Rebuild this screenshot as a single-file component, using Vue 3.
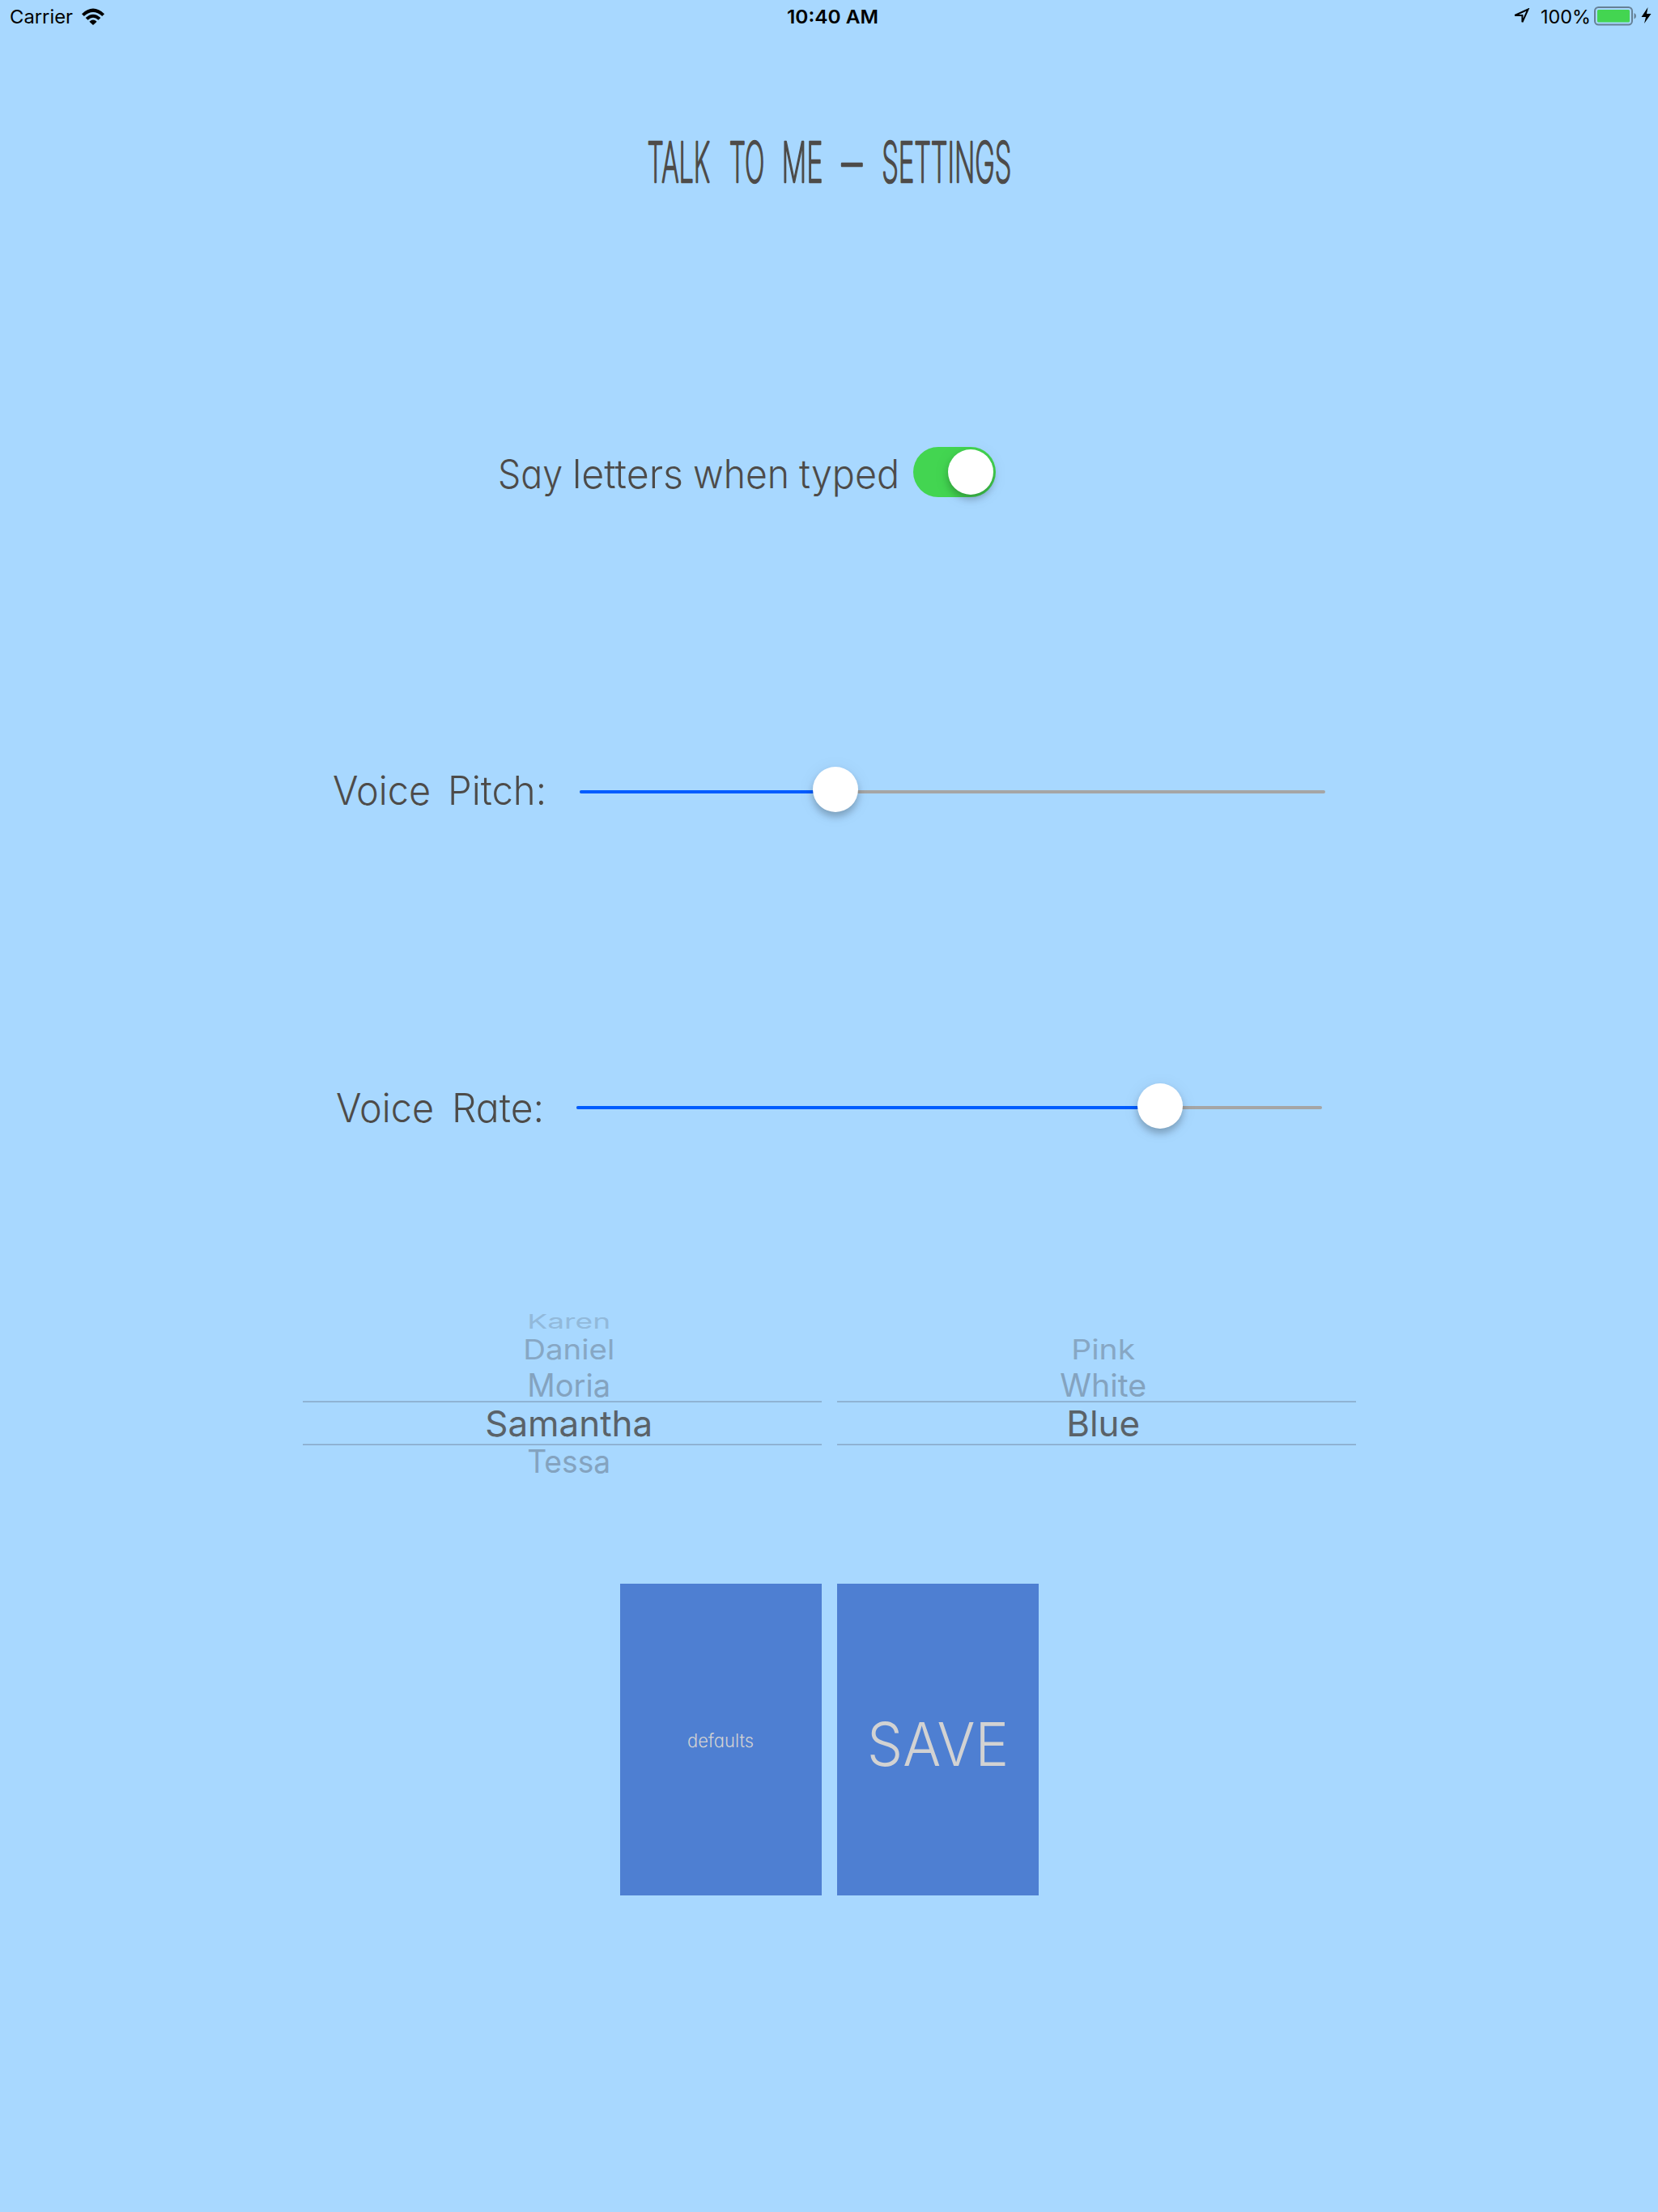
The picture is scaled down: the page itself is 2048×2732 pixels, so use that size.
<script setup>
import { h } from 'vue'

// A line of text whose words are fitted to fixed widths: [word, x, width]
const FitText = (props) =>
  h(
    'svg',
    { width: props.width, height: props.height, overflow: 'visible', 'font-size': props.size },
    props.words.map(([word, x, w]) =>
      h('text', { x, y: props.base, textLength: w, lengthAdjust: 'spacingAndGlyphs', fill: 'currentColor' }, word)
    )
  )
FitText.props = ['width', 'height', 'size', 'base', 'words']

// Drawn in a wide viewBox that is squeezed to a condensed lettering
const title = [['TALK', -1, 176], ['TO', 229, 99], ['ME', 376, 116], ['–', 545, 57], ['SETTINGS', 657, 364]]

const sliders = [
  { name: 'pitch', width: 304, words: [['Voice', -1, 121], ['Pitch:', 141, 122]], value: 34.4 },
  { name: 'rate', width: 296, words: [['Voice', -1, 121], ['Rate:', 142, 114]], value: 78.3 },
]

const pickers = [
  {
    name: 'voice',
    items: [
      { text: 'Karen', w: 103, cap: 18, y: 41, tone: 'far' },
      { text: 'Daniel', w: 113, cap: 24.3, y: 79, tone: 'mid' },
      { text: 'Moria', w: 103, cap: 28.3, y: 124.5, tone: 'near' },
      { text: 'Samantha', w: 207, cap: 32.3, y: 173.7, tone: 'on' },
      { text: 'Tessa', w: 103, cap: 28.3, y: 219.2, tone: 'near' },
    ],
  },
  {
    name: 'colour',
    items: [
      { text: 'Pink', w: 79, cap: 24.3, y: 79, tone: 'mid' },
      { text: 'White', w: 107, cap: 28.3, y: 124.5, tone: 'near' },
      { text: 'Blue', w: 91, cap: 32.3, y: 173.7, tone: 'on' },
    ],
  },
]
</script>

<template>
  <div class="screen">
    <header class="status">
      <div class="side">
        <FitText :width="88" :height="40" :size="23.5" :base="29" :words="[['Carrier', 0, 78]]" />
        <svg width="30" height="22" viewBox="0 0 30 22" class="wifi">
          <path d="M1 8.2Q15-5 29 8.2L26.2 11Q15 .9 3.8 11ZM5.7 13Q15 4.4 24.3 13L21.5 15.8Q15 9.8 8.5 15.8ZM10.4 17.7Q15 13.5 19.6 17.7L15 22Z" />
        </svg>
      </div>
      <div class="clock">
        <FitText :width="115" :height="40" :size="23.5" :base="29" :words="[['10:40 AM', 0, 113]]" />
      </div>
      <div class="side end">
        <svg width="21" height="20" viewBox="0 0 21 20" class="arrow">
          <path d="M18.5 1.5 11.4 17.3V9H2.2Z" />
        </svg>
        <FitText class="percent" :width="65" :height="40" :size="23.5" :base="29" :words="[['100%', -1, 62]]" />
        <svg width="71" height="24" viewBox="0 0 71 24">
          <rect x="1" y="1" width="46" height="21.5" rx="4.5" fill="none" stroke="#668096" stroke-width="2" />
          <rect x="4" y="4" width="40" height="15.5" rx="1.5" fill="#43d551" />
          <path d="M49.5 8Q52 9 52 11.8T49.5 15.6Z" fill="#668096" />
          <path d="M66.5 1 58.5 13H64L62 21 70.5 9H65Z" />
        </svg>
      </div>
    </header>

    <h1 class="title">
      <svg width="448" height="64" viewBox="0 0 1018 64" preserveAspectRatio="none" overflow="visible" font-size="69" fill="currentColor">
        <text v-for="[word, x, w] in title" :key="word" :x="x" y="57.5" :textLength="w" lengthAdjust="spacingAndGlyphs">{{ word }}</text>
      </svg>
    </h1>

    <div class="toggle-row">
      <FitText class="label" :width="512" :height="62" :size="49" :base="50.5" :words="[['Say', -1, 80], ['letters', 91, 137], ['when', 240, 119], ['typed', 371, 124]]" />
      <div class="switch"><i class="knob"></i></div>
    </div>

    <div v-for="s in sliders" :key="s.name" class="slider-row" :class="s.name">
      <FitText class="label" :width="s.width" :height="62" :size="49" :base="51" :words="s.words" />
      <div class="track">
        <div class="fill" :style="{ width: s.value + '%' }"><i class="knob"></i></div>
      </div>
    </div>

    <div class="pickers">
      <div v-for="p in pickers" :key="p.name" class="picker">
        <svg width="641" height="232" text-anchor="middle">
          <text
            v-for="i in p.items"
            :key="i.text"
            :class="i.tone"
            x="328.7"
            :y="i.y"
            :font-size="i.cap / 0.727"
            :textLength="i.w"
            lengthAdjust="spacingAndGlyphs"
          >{{ i.text }}</text>
          <path d="M0 131.3H641M0 184.3H641" stroke="#87a7c6" stroke-width="1.6" />
        </svg>
      </div>
    </div>

    <div class="buttons">
      <button type="button">
        <FitText :width="80" :height="24" :size="22.5" :base="20.5" :words="[['defaults', -1, 82]]" />
      </button>
      <button type="button" class="save">
        <FitText :width="168" :height="64" :size="74.5" :base="63.5" :words="[['SAVE', -3, 175]]" />
      </button>
    </div>
  </div>
</template>

<style>
body { margin: 0; background: #a8d8ff; }
</style>

<style scoped>
.screen {
  width: 2048px;
  height: 2732px;
  display: flex;
  flex-direction: column;
  align-items: center;
  background: #a8d8ff;
  color: #4d4b49;
  font-family: Inter, "Liberation Sans", sans-serif;
  overflow: hidden;
}
svg { display: block; flex: none; }
.status {
  width: 2048px;
  height: 40px;
  box-sizing: border-box;
  padding: 0 8px 0 12px;
  display: flex;
  align-items: center;
  justify-content: space-between;
  color: #000;
}
.side { flex: 1; display: flex; align-items: center; }
.end { justify-content: flex-end; }
.wifi { margin-bottom: 1px; }
.arrow { fill: none; stroke: #000; stroke-width: 2; margin-right: 14px; }
.clock { font-weight: 600; margin-left: 6px; }
.title {
  margin: 127px 0 0;
  font-weight: 200;
}
.title text {
  stroke: currentColor;
  stroke-width: 2.6px;
  stroke-linejoin: round;
}
.label { font-weight: 350; font-feature-settings: "cv11"; flex: none; }
.toggle-row {
  width: 614px;
  height: 62px;
  margin: 321px 204px 0 0;
  padding-left: 2px;
  display: flex;
}
.switch {
  width: 102px;
  height: 62px;
  border-radius: 31px;
  background: #43d551;
  box-sizing: border-box;
  padding: 3px;
  display: flex;
  justify-content: flex-end;
}
.knob {
  width: 56px;
  height: 56px;
  flex: none;
  border-radius: 50%;
  background: #fff;
  box-shadow: 0 6px 8px rgba(0, 0, 0, .22), 0 3px 22px rgba(0, 0, 0, .07);
}
.slider-row { height: 62px; display: flex; align-items: center; }
.pitch { margin-top: 329px; }
.rate { margin-top: 330px; }
.track { width: 921px; height: 4px; margin-top: 7px; border-radius: 2px; background: #a5a5a5; }
.fill {
  height: 4px;
  border-radius: 2px;
  background: #005cff;
  display: flex;
  align-items: center;
  justify-content: flex-end;
}
.fill .knob { margin: -6px -28px 0 0; }
.rate .track { margin-top: 3px; }
.rate .knob { margin-top: -4px; }
.pickers { margin-top: 203px; display: flex; gap: 19px; }
.far { fill: #92b9da; }
.mid { fill: #87a7c4; }
.near { fill: #84a3bf; }
.on { fill: #5a6268; }
.buttons { margin-top: 124px; display: flex; gap: 19px; }
button {
  width: 249px;
  height: 385px;
  padding: 0;
  border: 0;
  background: #4e7fd2;
  color: #d2d2d2;
  font-family: inherit;
  font-weight: 300;
  font-feature-settings: "cv11";
  display: flex;
  align-items: center;
  justify-content: center;
}
.save { font-weight: 350; }
</style>
